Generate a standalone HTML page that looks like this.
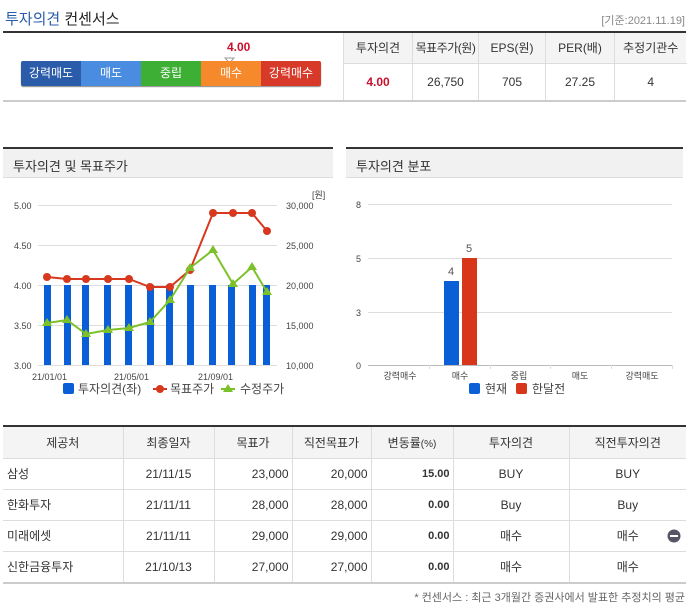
<!DOCTYPE html>
<html><head><meta charset="utf-8"><style>
*{margin:0;padding:0;box-sizing:border-box}
body{width:689px;height:610px;background:#fff;font-family:"Liberation Sans","Noto Sans CJK KR",sans-serif;position:relative;overflow:hidden;color:#333}
.a{position:absolute}
.t{font-size:12px;white-space:nowrap}
table{border-collapse:collapse;position:absolute;table-layout:fixed}
td{font-size:12px;color:#333;text-align:center;white-space:nowrap;overflow:visible}
.bt td{border:1px solid #ddd}
.bt td:first-child{border-left:0;text-align:left;padding-left:4px}
.bt td:last-child{border-right:0}
.bt tr:first-child td{border-top:0;text-align:center;padding-left:0}
.r{text-align:right!important;padding-right:3px}
.b{font-weight:bold;font-size:11px}
</style></head><body>
<div class="a" style="left:5px;top:8px;font-size:15px"><span style="color:#2a5caa">투자의견</span> <span style="color:#222">컨센서스</span></div>
<div class="a t" style="right:4px;top:12px;font-size:11px;color:#888">[기준:2021.11.19]</div>
<div class="a" style="left:3px;top:31px;width:683px;height:2px;background:#333"></div>
<div class="a" style="left:3px;top:100px;width:683px;height:2px;background:#ccc"></div>
<div class="a" style="left:227px;top:40px;font-size:12px;font-weight:bold;color:#c8102e">4.00</div>
<svg class="a" style="left:224px;top:57px" width="11" height="7"><path d="M1 1H10L5.5 6Z" fill="#fff" stroke="#999"/></svg>
<div class="a" style="left:21px;top:61px;width:300px;height:25px;display:flex;border-radius:2px;overflow:hidden;font-size:12px;color:#fff;line-height:25px;text-align:center;box-shadow:0 1px 1px #888">
<div style="width:60px;background:#2a5caa">강력매도</div><div style="width:60px;background:#4a8de0">매도</div><div style="width:60px;background:#3daf34">중립</div><div style="width:60px;background:#f6892b">매수</div><div style="width:60px;background:#d83a2a">강력매수</div></div>
<div class="a" style="left:343px;top:33px;width:343px;height:30px;background:#f4f4f4"></div>
<table style="left:343px;top:33px;width:343px">
<colgroup><col style="width:69px"><col style="width:66px"><col style="width:67px"><col style="width:69px"><col style="width:72px"></colgroup>
<tr style="height:30px"><td style="border-left:1px solid #ddd;border-right:1px solid #ddd">투자의견</td><td style="border-right:1px solid #ddd;letter-spacing:-0.5px">목표주가(원)</td><td style="border-right:1px solid #ddd">EPS(원)</td><td style="border-right:1px solid #ddd">PER(배)</td><td>추정기관수</td></tr>
<tr style="height:37px"><td style="border-left:1px solid #ddd;border-right:1px solid #ddd;border-top:1px solid #ddd;color:#c8102e;font-weight:bold">4.00</td><td style="border-right:1px solid #ddd;border-top:1px solid #ddd">26,750</td><td style="border-right:1px solid #ddd;border-top:1px solid #ddd">705</td><td style="border-right:1px solid #ddd;border-top:1px solid #ddd">27.25</td><td style="border-top:1px solid #ddd">4</td></tr>
</table>
<div class="a" style="left:3px;top:147px;width:330px;height:2px;background:#333"></div>
<div class="a" style="left:3px;top:149px;width:330px;height:29px;background:#f1f1f1;border-bottom:1px solid #ddd;font-size:13px;padding:7px 0 0 10px">투자의견 및 목표주가</div>
<div class="a" style="left:346px;top:147px;width:337px;height:2px;background:#333"></div>
<div class="a" style="left:346px;top:149px;width:337px;height:29px;background:#f1f1f1;border-bottom:1px solid #ddd;font-size:13px;padding:7px 0 0 10px">투자의견 분포</div>
<svg class="a" style="left:0;top:180px" width="689" height="225" font-family="Liberation Sans,Noto Sans CJK KR,sans-serif">
<g transform="translate(0,-180)">
<g stroke="#ddd" stroke-width="1"><line x1="38" y1="205.5" x2="277" y2="205.5"/><line x1="38" y1="245.5" x2="277" y2="245.5"/><line x1="38" y1="285.5" x2="277" y2="285.5"/><line x1="38" y1="325.5" x2="277" y2="325.5"/><line x1="38" y1="365.5" x2="277" y2="365.5"/></g>
<g font-size="9" fill="#444"><text x="14" y="209">5.00</text><text x="14" y="249">4.50</text><text x="14" y="289">4.00</text><text x="14" y="329">3.50</text><text x="14" y="369">3.00</text>
<text x="286" y="209">30,000</text><text x="286" y="249">25,000</text><text x="286" y="289">20,000</text><text x="286" y="329">15,000</text><text x="286" y="369">10,000</text><text x="312" y="198">[원]</text>
<text x="32" y="380">21/01/01</text><text x="114" y="380">21/05/01</text><text x="198" y="380">21/09/01</text></g>
<g fill="#0a5ed6"><rect x="44" y="285" width="7" height="80"/><rect x="64" y="285" width="7" height="80"/><rect x="82" y="285" width="7" height="80"/><rect x="104" y="285" width="7" height="80"/><rect x="125" y="285" width="7" height="80"/><rect x="147" y="285" width="7" height="80"/><rect x="166" y="285" width="7" height="80"/><rect x="187" y="285" width="7" height="80"/><rect x="209" y="285" width="7" height="80"/><rect x="228" y="285" width="7" height="80"/><rect x="249" y="285" width="7" height="80"/><rect x="263" y="285" width="7" height="80"/></g>
<polyline fill="none" stroke="#d7381e" stroke-width="2" points="47,277 67,279 86,279 108,279 129,279 150,287 170,287 190,270 213,213 233,213 252,213 267,231"/>
<g fill="#d7381e"><circle cx="47" cy="277" r="4"/><circle cx="67" cy="279" r="4"/><circle cx="86" cy="279" r="4"/><circle cx="108" cy="279" r="4"/><circle cx="129" cy="279" r="4"/><circle cx="150" cy="287" r="4"/><circle cx="170" cy="287" r="4"/><circle cx="190" cy="270" r="4"/><circle cx="213" cy="213" r="4"/><circle cx="233" cy="213" r="4"/><circle cx="252" cy="213" r="4"/><circle cx="267" cy="231" r="4"/></g>
<polyline fill="none" stroke="#7cc12a" stroke-width="2" points="47,323 67,320 86,334 108,330 129,328 150,322 170,300 190,268 213,250 233,284 252,267 267,292"/>
<g fill="#7cc12a"><path d="M47 318l5 8h-10z"/><path d="M67 315l5 8h-10z"/><path d="M86 329l5 8h-10z"/><path d="M108 325l5 8h-10z"/><path d="M129 323l5 8h-10z"/><path d="M150 317l5 8h-10z"/><path d="M170 295l5 8h-10z"/><path d="M190 263l5 8h-10z"/><path d="M213 245l5 8h-10z"/><path d="M233 279l5 8h-10z"/><path d="M252 262l5 8h-10z"/><path d="M267 287l5 8h-10z"/></g>
<rect x="63" y="383" width="11" height="11" rx="2" fill="#0a5ed6"/><text x="78" y="393" font-size="12" fill="#444">투자의견(좌)</text>
<line x1="153" y1="389" x2="167" y2="389" stroke="#d7381e" stroke-width="2"/><circle cx="160" cy="389" r="4" fill="#d7381e"/><text x="170" y="393" font-size="12" fill="#444">목표주가</text>
<line x1="221" y1="389" x2="235" y2="389" stroke="#7cc12a" stroke-width="2"/><path d="M228 384l5 8h-10z" fill="#7cc12a"/><text x="240" y="393" font-size="12" fill="#444">수정주가</text>
<g stroke="#ddd"><line x1="368" y1="204.5" x2="672" y2="204.5"/><line x1="368" y1="258.5" x2="672" y2="258.5"/><line x1="368" y1="312.5" x2="672" y2="312.5"/><line x1="368" y1="365.5" x2="672" y2="365.5" stroke="#bbb"/>
<line x1="429.5" y1="365" x2="429.5" y2="369"/><line x1="490.5" y1="365" x2="490.5" y2="369"/><line x1="550.5" y1="365" x2="550.5" y2="369"/><line x1="611.5" y1="365" x2="611.5" y2="369"/><line x1="672.5" y1="365" x2="672.5" y2="369"/></g>
<g font-size="9" fill="#444"><text x="356" y="208">8</text><text x="356" y="262">5</text><text x="356" y="316">3</text><text x="356" y="369">0</text>
<g text-anchor="middle"><text x="400" y="379">강력매수</text><text x="460" y="379">매수</text><text x="519" y="379">중립</text><text x="580" y="379">매도</text><text x="642" y="379">강력매도</text></g></g>
<rect x="444" y="281" width="15" height="84" fill="#0a5ed6"/><rect x="462" y="258" width="15" height="107" fill="#d8361a"/>
<text x="451" y="275" font-size="11" fill="#555" text-anchor="middle">4</text><text x="469" y="252" font-size="11" fill="#555" text-anchor="middle">5</text>
<rect x="469" y="383" width="11" height="11" rx="2" fill="#0a5ed6"/><text x="485" y="393" font-size="12" fill="#444">현재</text>
<rect x="516" y="383" width="11" height="11" rx="2" fill="#d8361a"/><text x="532" y="393" font-size="12" fill="#444">한달전</text>
</g></svg>
<div class="a" style="left:3px;top:425px;width:683px;height:2px;background:#333"></div>
<div class="a" style="left:3px;top:427px;width:683px;height:31px;background:#f4f4f4"></div>
<table class="bt" style="left:3px;top:427px;width:683px">
<colgroup><col style="width:120px"><col style="width:91px"><col style="width:78px"><col style="width:79px"><col style="width:82px"><col style="width:116px"><col style="width:117px"></colgroup>
<tr style="height:31px"><td>제공처</td><td>최종일자</td><td>목표가</td><td>직전목표가</td><td>변동률<span style="font-size:10px">(%)</span></td><td>투자의견</td><td>직전투자의견</td></tr>
<tr style="height:31px"><td>삼성</td><td>21/11/15</td><td class="r">23,000</td><td class="r">20,000</td><td class="r b">15.00</td><td>BUY</td><td>BUY</td></tr>
<tr style="height:31px"><td>한화투자</td><td>21/11/11</td><td class="r">28,000</td><td class="r">28,000</td><td class="r b">0.00</td><td>Buy</td><td>Buy</td></tr>
<tr style="height:31px"><td>미래에셋</td><td>21/11/11</td><td class="r">29,000</td><td class="r">29,000</td><td class="r b">0.00</td><td>매수</td><td>매수</td></tr>
<tr style="height:31px"><td>신한금융투자</td><td>21/10/13</td><td class="r">27,000</td><td class="r">27,000</td><td class="r b">0.00</td><td>매수</td><td>매수</td></tr>
</table>
<div class="a" style="left:3px;top:582px;width:683px;height:2px;background:#ccc"></div>
<svg class="a" style="left:667px;top:529px" width="14" height="14"><circle cx="7" cy="7" r="6.5" fill="#556"/><rect x="3" y="6" width="8" height="2" fill="#fff"/></svg>
<div class="a t" style="right:4px;top:589px;font-size:11px;color:#666">* 컨센서스 : 최근 3개월간 증권사에서 발표한 추정치의 평균</div>
</body></html>
